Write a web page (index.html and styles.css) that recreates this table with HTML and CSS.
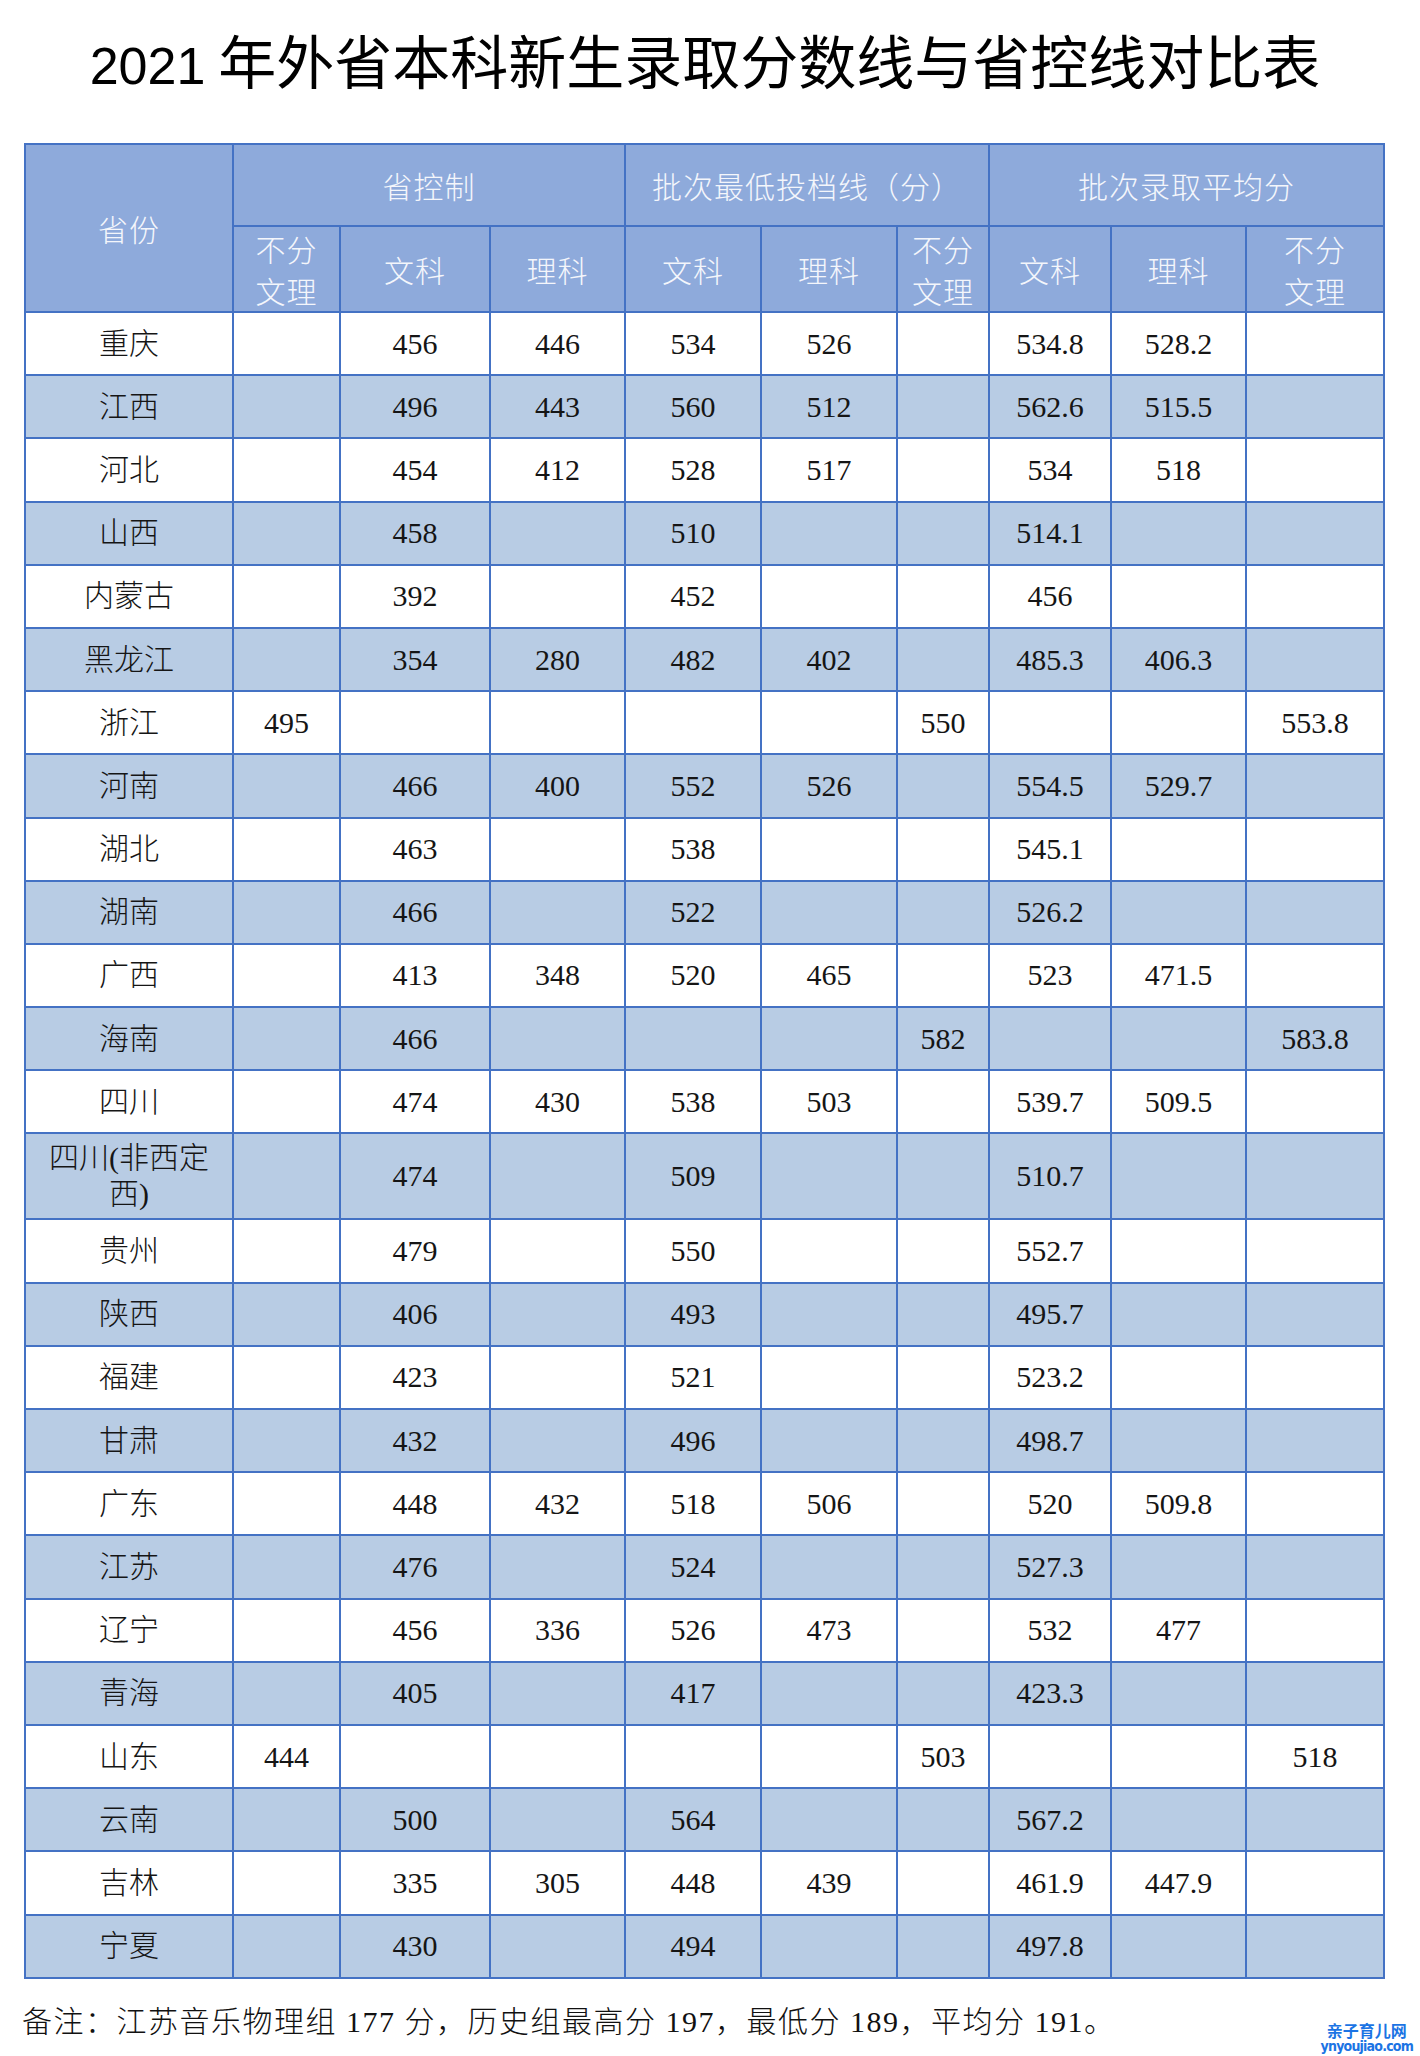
FILE: index.html
```html
<!DOCTYPE html>
<html lang="zh-CN">
<head>
<meta charset="utf-8">
<title>2021年外省本科新生录取分数线与省控线对比表</title>
<link rel="stylesheet" href="styles.css">
</head>
<body>
<div class="page">
  <h1 class="title"><span class="title-num">2021</span> 年外省本科新生录取分数线与省控线对比表</h1>

  <table class="score-table">
    <colgroup>
      <col class="c-prov">
      <col class="c2">
      <col class="c3">
      <col class="c4">
      <col class="c5">
      <col class="c6">
      <col class="c7">
      <col class="c8">
      <col class="c9">
      <col class="c10">
    </colgroup>
    <thead>
      <tr class="head1">
        <th rowspan="2">省份</th>
        <th colspan="3">省控制</th>
        <th colspan="3">批次最低投档线（分）</th>
        <th colspan="3">批次录取平均分</th>
      </tr>
      <tr class="head2">
        <th class="two">不分<br>文理</th>
        <th>文科</th>
        <th>理科</th>
        <th>文科</th>
        <th>理科</th>
        <th class="two">不分<br>文理</th>
        <th>文科</th>
        <th>理科</th>
        <th class="two">不分<br>文理</th>
      </tr>
    </thead>
    <tbody>
      <tr><td>重庆</td><td></td><td>456</td><td>446</td><td>534</td><td>526</td><td></td><td>534.8</td><td>528.2</td><td></td></tr>
      <tr><td>江西</td><td></td><td>496</td><td>443</td><td>560</td><td>512</td><td></td><td>562.6</td><td>515.5</td><td></td></tr>
      <tr><td>河北</td><td></td><td>454</td><td>412</td><td>528</td><td>517</td><td></td><td>534</td><td>518</td><td></td></tr>
      <tr><td>山西</td><td></td><td>458</td><td></td><td>510</td><td></td><td></td><td>514.1</td><td></td><td></td></tr>
      <tr><td>内蒙古</td><td></td><td>392</td><td></td><td>452</td><td></td><td></td><td>456</td><td></td><td></td></tr>
      <tr><td>黑龙江</td><td></td><td>354</td><td>280</td><td>482</td><td>402</td><td></td><td>485.3</td><td>406.3</td><td></td></tr>
      <tr><td>浙江</td><td>495</td><td></td><td></td><td></td><td></td><td>550</td><td></td><td></td><td>553.8</td></tr>
      <tr><td>河南</td><td></td><td>466</td><td>400</td><td>552</td><td>526</td><td></td><td>554.5</td><td>529.7</td><td></td></tr>
      <tr><td>湖北</td><td></td><td>463</td><td></td><td>538</td><td></td><td></td><td>545.1</td><td></td><td></td></tr>
      <tr><td>湖南</td><td></td><td>466</td><td></td><td>522</td><td></td><td></td><td>526.2</td><td></td><td></td></tr>
      <tr><td>广西</td><td></td><td>413</td><td>348</td><td>520</td><td>465</td><td></td><td>523</td><td>471.5</td><td></td></tr>
      <tr><td>海南</td><td></td><td>466</td><td></td><td></td><td></td><td>582</td><td></td><td></td><td>583.8</td></tr>
      <tr><td>四川</td><td></td><td>474</td><td>430</td><td>538</td><td>503</td><td></td><td>539.7</td><td>509.5</td><td></td></tr>
      <tr class="tall"><td class="wrap">四川(非西定<br>西)</td><td></td><td>474</td><td></td><td>509</td><td></td><td></td><td>510.7</td><td></td><td></td></tr>
      <tr><td>贵州</td><td></td><td>479</td><td></td><td>550</td><td></td><td></td><td>552.7</td><td></td><td></td></tr>
      <tr><td>陕西</td><td></td><td>406</td><td></td><td>493</td><td></td><td></td><td>495.7</td><td></td><td></td></tr>
      <tr><td>福建</td><td></td><td>423</td><td></td><td>521</td><td></td><td></td><td>523.2</td><td></td><td></td></tr>
      <tr><td>甘肃</td><td></td><td>432</td><td></td><td>496</td><td></td><td></td><td>498.7</td><td></td><td></td></tr>
      <tr><td>广东</td><td></td><td>448</td><td>432</td><td>518</td><td>506</td><td></td><td>520</td><td>509.8</td><td></td></tr>
      <tr><td>江苏</td><td></td><td>476</td><td></td><td>524</td><td></td><td></td><td>527.3</td><td></td><td></td></tr>
      <tr><td>辽宁</td><td></td><td>456</td><td>336</td><td>526</td><td>473</td><td></td><td>532</td><td>477</td><td></td></tr>
      <tr><td>青海</td><td></td><td>405</td><td></td><td>417</td><td></td><td></td><td>423.3</td><td></td><td></td></tr>
      <tr><td>山东</td><td>444</td><td></td><td></td><td></td><td></td><td>503</td><td></td><td></td><td>518</td></tr>
      <tr><td>云南</td><td></td><td>500</td><td></td><td>564</td><td></td><td></td><td>567.2</td><td></td><td></td></tr>
      <tr><td>吉林</td><td></td><td>335</td><td>305</td><td>448</td><td>439</td><td></td><td>461.9</td><td>447.9</td><td></td></tr>
      <tr><td>宁夏</td><td></td><td>430</td><td></td><td>494</td><td></td><td></td><td>497.8</td><td></td><td></td></tr>
    </tbody>
  </table>

  <p class="note">备注：江苏音乐物理组 177 分，历史组最高分 197，最低分 189，平均分 191。</p>

  <div class="watermark">
    <span class="wm-cn">亲子育儿网</span>
    <span class="wm-en">ynyoujiao.com</span>
  </div>
</div>
</body>
</html>
```

FILE: styles.css
```css
html, body {
  margin: 0;
  padding: 0;
  background: #ffffff;
}

.page {
  position: relative;
  width: 1420px;
  height: 2056px;
  overflow: hidden;
  font-family: "Liberation Serif", "Noto Sans CJK SC", serif;
  color: #111111;
}

.title {
  margin: 0;
  padding-top: 30px;
  padding-right: 10px;
  height: 143px;
  box-sizing: border-box;
  text-align: center;
  font-family: "Noto Sans CJK SC", sans-serif;
  font-weight: 400;
  font-size: 58px;
  line-height: 58px;
  color: #000000;
}

.title-num {
  font-family: "Liberation Sans", sans-serif;
  font-size: 52px;
}

.score-table {
  margin-left: 24px;
  border-collapse: collapse;
  table-layout: fixed;
  width: 1361px;
  border: 2px solid #4472c4;
}

.c-prov { width: 208px; }
.c2 { width: 107px; }
.c3 { width: 150px; }
.c4 { width: 135px; }
.c5 { width: 136px; }
.c6 { width: 136px; }
.c7 { width: 92px; }
.c8 { width: 122px; }
.c9 { width: 135px; }
.c10 { width: 138px; }

.score-table th,
.score-table td {
  border: 2px solid #4472c4;
  padding: 0;
  text-align: center;
  vertical-align: middle;
}

.score-table th {
  background: #8eaadb;
  color: #f4f6fb;
  font-weight: 300;
  font-family: "Noto Sans CJK SC", sans-serif;
  font-size: 30px;
  letter-spacing: 1px;
  line-height: 42px;
}

.head1 { height: 82px; }
.head2 { height: 86px; }

.score-table td {
  font-size: 30px;
  font-weight: 300;
  line-height: 34px;
  color: #151515;
}

.score-table tbody tr { height: 63.2px; }
.score-table tbody tr:nth-child(even) td { background: #b8cce4; }
.score-table tbody tr.tall { height: 86px; }

.score-table td.wrap {
  line-height: 36px;
}

.note {
  margin: 23px 0 0 22px;
  font-size: 30px;
  font-weight: 300;
  line-height: 40px;
  letter-spacing: 1.5px;
  color: #111111;
}

.watermark {
  position: absolute;
  right: 7px;
  bottom: 3px;
  display: flex;
  flex-direction: column;
  align-items: center;
  gap: 3px;
  color: #1b74e4;
  font-weight: 700;
}

.wm-cn {
  font-family: "Noto Sans CJK SC", sans-serif;
  font-size: 16px;
  line-height: 14px;
}

.wm-en {
  font-family: "DejaVu Sans Condensed", "DejaVu Sans", sans-serif;
  font-size: 14px;
  line-height: 13px;
  letter-spacing: -0.8px;
}
```
